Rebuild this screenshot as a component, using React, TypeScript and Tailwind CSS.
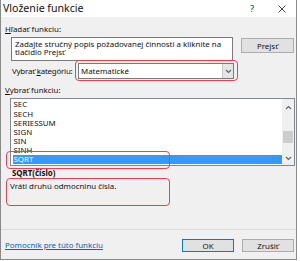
import React from "react";

const items = ["SEC", "SECH", "SERIESSUM", "SIGN", "SIN", "SINH", "SQRT"];

function Chevron({ up = false }: { up?: boolean }) {
  return (
    <svg width="7" height="5" viewBox="0 0 7 5">
      <path
        d={up ? "M1 4 L3.5 1.5 L6 4" : "M1 1 L3.5 3.5 L6 1"}
        fill="none"
        stroke="#606060"
        strokeWidth="1.1"
      />
    </svg>
  );
}

export default function App() {
  return (
    <div
      className="w-[300px] h-[261px] bg-white text-[#111]"
      style={{ fontFamily: '"Noto Sans", "Open Sans", sans-serif' }}
    >
      <div className="relative w-[297px] h-[260px] border-l border-r border-b border-[#8a8a8a] flex flex-col">
        {/* title bar */}
        <div className="h-[17px] bg-white flex items-center pl-[2px] pr-[10px]">
          <span className="text-[10.6px] leading-[17px]">Vloženie funkcie</span>
          <span className="ml-auto text-[9.5px] leading-[17px] text-[#333]">?</span>
          <svg className="ml-[24px]" width="8" height="8" viewBox="0 0 8 8">
            <path d="M0.5 0.5 L7.5 7.5 M7.5 0.5 L0.5 7.5" stroke="#333" strokeWidth="0.9" />
          </svg>
        </div>

        {/* body */}
        <div className="flex-1 bg-[#f0f0f0] flex flex-col text-[7.9px] leading-[8px]">
          <div className="mt-[8px] pl-[4px] h-[8px]">
            <span className="underline">H</span>ľadať funkciu:
          </div>

          <div className="mt-[4px] flex">
            <div className="ml-[10px] w-[222px] h-[24px] bg-white border border-[#7a7a7a] pt-[3px] pl-[3px] leading-[7.6px]">
              Zadajte stručný popis požadovanej činnosti a kliknite na
              <br />
              tlačidlo Prejsť
            </div>
            <div className="ml-[8px] mt-[1px] w-[53px] h-[15px] bg-[#e1e1e1] border border-[#adadad] flex items-center justify-center">
              Prejsť
            </div>
          </div>

          <div className="h-[20px] flex items-center">
            <div className="pl-[11px] w-[77px] shrink-0 whitespace-nowrap tracking-[-0.2px]">
              Vybrať <span className="underline">k</span>ategóriu:
            </div>
            <div className="w-[156px] h-[16px] bg-white border border-[#7a7a7a] flex items-center">
              <span className="pl-[2px]">Matematické</span>
              <div className="ml-auto w-[11px] h-[14px] bg-[#e5e5e5] border-l border-[#c8c8c8] flex items-center justify-center">
                <Chevron />
              </div>
            </div>
          </div>

          <div className="mt-[5px] pl-[4px] h-[8px]">
            <span className="underline">V</span>ybrať funkciu:
          </div>

          <div className="mt-[4px] ml-[9px] w-[285px] h-[68px] bg-white border border-[#828790] flex">
            <div className="flex-1 pt-[1.4px] pl-[1.5px]">
              {items.map((it) => (
                <div
                  key={it}
                  className={
                    "h-[9.17px] leading-[9.17px] pl-[1px] " +
                    (it === "SQRT" ? "bg-[#3399ff] text-white" : "")
                  }
                >
                  {it}
                </div>
              ))}
            </div>
            <div className="w-[12px] bg-[#f0f0f0] flex flex-col items-center">
              <div className="mt-[6px]">
                <Chevron up />
              </div>
              <div className="mt-[21px] w-[10px] h-[12px] bg-[#cdcdcd]" />
              <div className="mt-auto mb-[4px]">
                <Chevron />
              </div>
            </div>
          </div>

          <div className="mt-[3px] pl-[11px] h-[8px] font-bold">SQRT(číslo)</div>
          <div className="mt-[5px] pl-[9px] h-[8px]">Vráti druhú odmocninu čísla.</div>

          <div className="mt-auto h-px bg-[#dcdcdc]" />
          <div className="h-[29px] flex items-start pt-[9px]">
            <span className="pl-[4px] mt-[2px] text-[#0066cc] underline whitespace-nowrap">
              Pomocník pre túto funkciu
            </span>
            <div className="ml-auto w-[52px] h-[13px] bg-[#e1e1e1] border border-[#0078d7] flex items-center justify-center">
              OK
            </div>
            <div className="ml-[8px] mr-[2px] w-[52px] h-[13px] bg-[#e1e1e1] border border-[#adadad] flex items-center justify-center">
              Zrušiť
            </div>
          </div>
        </div>

        {/* red annotation outlines */}
        <div className="absolute left-[74px] top-[60px] w-[163px] h-[21px] rounded-[4px] border border-[#e8414f]" />
        <div className="absolute left-[5px] top-[151px] w-[164px] h-[18px] rounded-[4px] border border-[#e8414f]" />
        <div className="absolute left-[5px] top-[178px] w-[164px] h-[28px] rounded-[4px] border border-[#e8414f]" />
      </div>
    </div>
  );
}
